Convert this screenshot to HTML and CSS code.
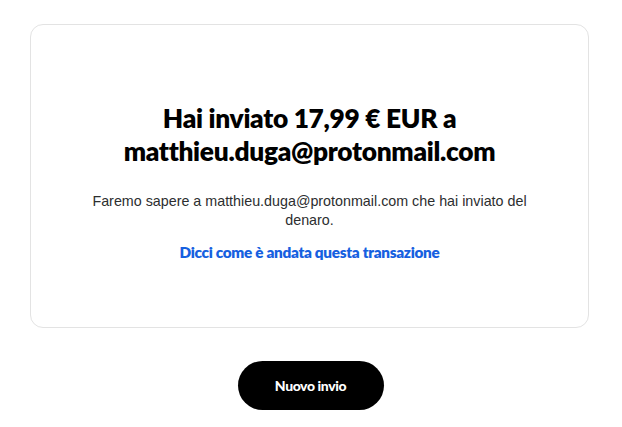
FILE: index.html
```html
<!DOCTYPE html>
<html lang="it">
<head>
<meta charset="utf-8">
<title>Invio completato</title>
<link rel="stylesheet" href="styles.css">
</head>
<body>
<main class="page">
  <section class="card">
    <h1 class="title">Hai inviato 17,99 € EUR a matthieu.duga@protonmail.com</h1>
    <p class="desc">Faremo sapere a matthieu.duga@protonmail.com che hai inviato del denaro.</p>
    <a class="link" href="#">Dicci come è andata questa transazione</a>
  </section>
  <div class="actions">
    <button class="btn" type="button">Nuovo invio</button>
  </div>
</main>
</body>
</html>
```
FILE: styles.css
```css
html, body {
  margin: 0;
  padding: 0;
  background: #ffffff;
}
.page {
  padding: 24px 33px 0 30px;
  display: flex;
  flex-direction: column;
  align-items: stretch;
}
.card {
  height: 304px;
  box-sizing: border-box;
  border: 1px solid #e3e3e3;
  border-radius: 13px;
  display: flex;
  flex-direction: column;
  align-items: center;
  padding: 77px 40px 0;
  text-align: center;
}
.title {
  margin: 0;
  font-family: "Lato", sans-serif;
  font-weight: 800;
  font-size: 26.3px;
  line-height: 33px;
  color: #000;
  max-width: 420px;
  letter-spacing: -0.3px;
}
.desc {
  margin: 24px 0 0;
  font-family: "Liberation Sans", Arial, sans-serif;
  font-size: 14.3px;
  line-height: 19px;
  color: #2c2e2f;
  max-width: 460px;
}
.link {
  margin-top: 13px;
  font-family: "Lato", sans-serif;
  font-weight: 800;
  font-size: 15.3px;
  line-height: 18px;
  color: #1660e0;
  text-decoration: none;
  letter-spacing: -0.3px;
}
.actions {
  display: flex;
  justify-content: center;
  padding-top: 33px;
  padding-left: 2px;
}
.btn {
  width: 146px;
  height: 49px;
  border: none;
  border-radius: 25px;
  background: #000;
  color: #fff;
  font-family: "Lato", sans-serif;
  font-weight: 900;
  font-size: 14px;
  letter-spacing: -0.4px;
  cursor: pointer;
}
```
